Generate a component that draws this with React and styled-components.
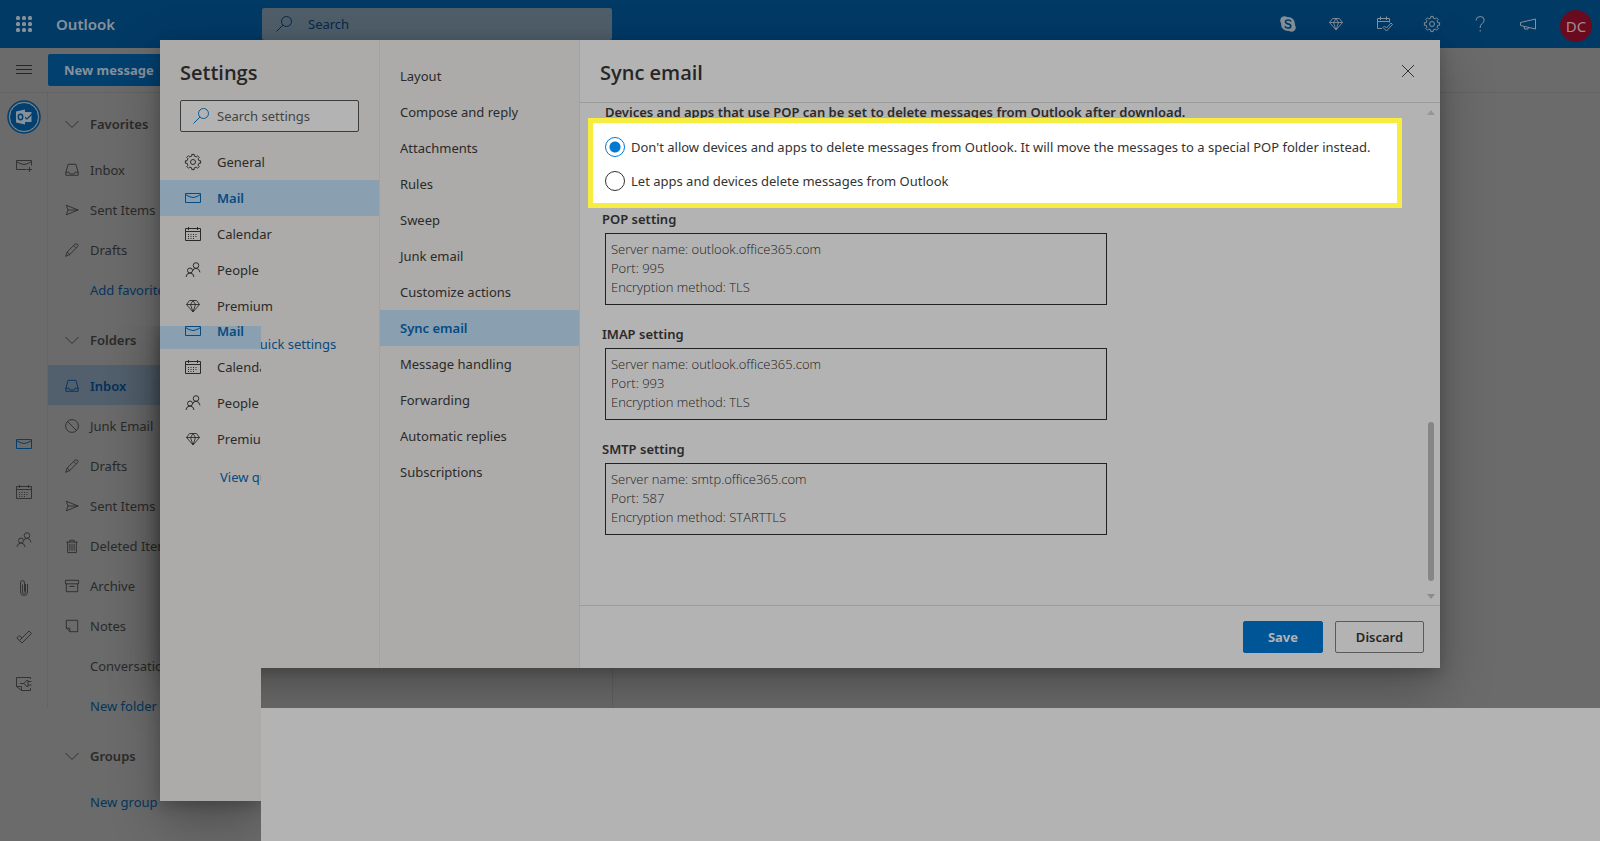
import React from "react";
import styled, { createGlobalStyle, css } from "styled-components";

const GlobalStyle = createGlobalStyle`
  * { box-sizing: border-box; }
  body {
    margin: 0;
    background: #6b6b6b;
    color: #2a2a2a;
    font: 400 13px/20px "Noto Sans", "Open Sans", sans-serif;
    overflow: hidden;
  }
  a { color: inherit; text-decoration: none; }
  button, input { font: inherit; color: inherit; }
  button { cursor: pointer; }
  h1, h2, h3, p { margin: 0; }
`;

/* ---------- icons ---------- */

const Svg = styled.svg`
  display: block;
  flex: none;
  width: ${(p) => p.$size || 16}px;
  height: ${(p) => p.$size || 16}px;
  fill: none;
  stroke: currentColor;
  stroke-width: 1;
  overflow: visible;
`;

const gearPath = (() => {
  const pts = [];
  const teeth = 8;
  for (let i = 0; i < teeth; i += 1) {
    [[-0.28, 6], [-0.2, 7.7], [0.2, 7.7], [0.28, 6]].forEach(([o, r]) => {
      const a = ((i + o) / teeth) * Math.PI * 2;
      pts.push(`${(8 + Math.sin(a) * r).toFixed(2)} ${(8 - Math.cos(a) * r).toFixed(2)}`);
    });
  }
  return `M${pts.join("L")}Z`;
})();

const shapes = {
  menu: <path d="M0 3.5h16M0 7.5h16M0 11.5h16" />,
  search: (
    <>
      <circle cx="10.5" cy="5.5" r="5" />
      <path d="M7 9L.5 15.5" />
    </>
  ),
  gear: (
    <>
      <path d={gearPath} />
      <circle cx="8" cy="8" r="2.5" />
    </>
  ),
  mail: <path d="M.5 3.5h15v9H.5zM.5 4.5l3.5 2q4 2.200 8 0l3.500-2" />,
  mailPlus: <path d="M10.500 12.500H.5v-9h15v5M.5 4.500l3.500 2q4 2.200 8 0l3.500-2M13.500 10v5M11 12.500h5" />,
  calendar: (
    <>
      <path d="M.5 2.500h15v12H.5zM.5 5.500h15M3.500 1v3M12.500 1v3" />
      <path d="M3 8.500h10M3 10.500h10M3 12.500h7" strokeDasharray="1 1.500" />
    </>
  ),
  people: (
    <>
      <circle cx="11" cy="3.500" r="2.800" />
      <path d="M7.500 9q.8-2.700 3.500-2.700 3.300 0 4 4" />
      <circle cx="5" cy="8.500" r="2.500" />
      <path d="M1 15q.5-4 4-4t4 4" />
    </>
  ),
  diamond: <path strokeWidth=".9" d="M4.500 2.500h7L14.500 6.500 8 14 1.500 6.500zM1.500 6.500h13M5.500 6.500L8 14l2.500-7.500M5.500 6.500L8 2.500l2.500 4" />,
  inbox: <path d="M3.500 1.500h9l2.500 9v3.500H1v-3.500zM1 10.500h3.500q.5 2 2 2h3q1.500 0 2-2H15" />,
  send: <path d="M1.500 2.500L15 8 1.500 13.500 3.500 8zM3.500 8H15" />,
  pencil: <path d="M.8 15.200l1.700-5L11.500 1.200q1.300-1 2.500.2 1.600 1.400.4 2.700L5.500 13.200zM2.500 10.200l3 3M10 2.800l3 3" />,
  junk: (
    <>
      <circle cx="8" cy="8" r="7.300" />
      <path d="M2.800 2.800l10.400 10.400" />
    </>
  ),
  trash: <path d="M1.500 3.500h13M5.500 3.500v-2h5v2M3 3.500v12h10v-12M5.500 5.500v8M8 5.500v8M10.500 5.500v8" />,
  archive: <path d="M.5 1.500h15v4H.5zM1.500 5.500v9h13v-9M5 8.500h6" />,
  note: <path d="M1.500 1.500h13v13h-9l-4-4zM1.500 10.500h4v4" />,
  chevron: <path d="M.5 4.500L8 12l7.500-7.500" />,
  clip: <path d="M11.500 4v8q0 3.500-3.500 3.500T4.500 12V3q0-2.500 2-2.500t2 2.500v8.500M6.500 4.500v8q0 1 1.500 1t1.500-1V4M4.500 5v7" />,
  check: <path d="M.8 10l2.500-2.500 2.700 2.500 7-7L15.500 5.500 6 15zM3.500 12.500L6 10" />,
  plug: <path d="M14.500 3V1.500H.5v9l5 4h9V12M.5 10.500h5v4M4 7.500h4M8 7.500l2.500-3H12v6h-1.500zM12 5.500h3.500M12 9h3.500" />,
  dayTask: <path d="M6 12.500H1.500V2.500h12v4M1.500 5.500h12M4.500.5v3.500M10.500.5v3.500M7 11.500l1.500-1.500 2 2 4.500-5 1.500 1.500-6 6.500z" />,
  help: (
    <>
      <path d="M4 4.500q.2-4 4.200-4 4 0 4 3.500 0 2-2 3.500-2 1.500-2 3.500v1" />
      <path d="M8.200 14v1.500" />
    </>
  ),
  horn: <path d="M15.500 3v10L.5 9.500v-3zM4 10.500l.5 2.500h3.500l.5-1.500" />,
  close: <path d="M2 2l12 12M14 2L2 14" />,
};

const Icon = ({ name, size }) => (
  <Svg $size={size} viewBox="0 0 16 16" aria-hidden="true">{shapes[name]}</Svg>
);

/* ---------- mail page behind the dialog ---------- */

const Page = styled.div`
  position: relative;
  min-height: 100vh;
  overflow: hidden;
`;

const Header = styled.header`
  display: flex;
  align-items: center;
  height: 48px;
  padding: 0 8px 0 16px;
  background: #023a66;
  color: #87919a;
`;

const Brand = styled.a`
  width: 206px;
  margin-left: 24px;
  font-size: 15px;
  font-weight: 600;
`;

const HeaderSearch = styled.label`
  display: flex;
  align-items: center;
  gap: 16px;
  width: 350px;
  height: 32px;
  padding-left: 14px;
  border-radius: 2px;
  background: #4f5e69;
  color: #04294a;
`;

const PlainInput = styled.input`
  flex: 1;
  min-width: 0;
  padding: 0;
  border: 0;
  outline: 0;
  background: transparent;
  &::placeholder { color: inherit; opacity: 1; }
`;

const HeaderTools = styled.div`
  display: flex;
  margin-left: auto;
`;

const IconButton = styled.button`
  display: grid;
  place-items: center;
  width: 48px;
  height: 48px;
  padding: 0;
  border: 0;
  background: transparent;
  color: ${(p) => p.$color || "inherit"};
`;

const Avatar = styled.button`
  width: 32px;
  height: 32px;
  margin: 10px 0 0 8px;
  padding: 0;
  border: 0;
  border-radius: 50%;
  background: #6a0a1e;
  color: #a58a90;
  font-size: 15px;
`;

const CommandBar = styled.div`
  display: flex;
  align-items: center;
  height: 45px;
  border-bottom: 1px solid #646464;
`;

const NewMessage = styled.button`
  width: 160px;
  height: 32px;
  padding: 0 0 0 16px;
  border: 0;
  border-radius: 2px;
  background: #02406f;
  color: #87919a;
  font-weight: 700;
  text-align: left;
`;

const Workspace = styled.div`
  display: flex;
  align-items: flex-start;
`;

const Rail = styled.nav`
  display: flex;
  flex-direction: column;
  width: 48px;
  height: 615px;
  border-right: 1px solid #646464;
  color: #333;
`;

const RailGroup = styled.div`
  margin-top: ${(p) => (p.$apart ? 231 : 0)}px;
`;

const Folders = styled.nav`
  width: 240px;
  white-space: nowrap;
`;

const MessageList = styled.main`
  width: 325px;
  height: 640px;
  border-right: 1px solid #626262;
`;

const FolderHeading = styled.h3`
  display: flex;
  align-items: center;
  gap: 11px;
  height: 56px;
  padding: 6px 0 0 17px;
  font-size: 13px;
  font-weight: 600;
`;

const Folder = styled.a`
  display: flex;
  align-items: center;
  gap: 11px;
  height: 40px;
  padding: 2px 0 0 ${(p) => (p.$link ? 42 : 17)}px;
  ${(p) => p.$link && css`color: #06355c;`}
  ${(p) => p.$current && css`
    background: #52606d;
    color: #04305a;
    font-weight: 600;
  `}
`;

/* ---------- settings dialog ---------- */

const shadow = "0 20px 50px rgba(0, 0, 0, 0.28), 0 4px 14px rgba(0, 0, 0, 0.2)";

const Dialog = styled.section`
  position: absolute;
  top: 40px;
  left: 160px;
  right: 160px;
  display: grid;
  grid-template-columns: 220px 200px 1fr;
  background: #b3b3b3;
  box-shadow: ${shadow};
`;

const Column = styled.div`
  border-right: 1px solid #a3a2a1;
  background: #acaba9;
  padding-top: ${(p) => p.$top || 0}px;
`;

const Title = styled.h2`
  font-family: "Open Sans", sans-serif;
  font-size: 20px;
  line-height: 28px;
  font-weight: 600;
  color: #262626;
`;

const SettingsTop = styled.div`
  padding: 19px 20px 12px;
`;

const SettingsSearch = styled.label`
  display: flex;
  align-items: center;
  gap: 8px;
  height: 32px;
  margin-top: 13px;
  padding: 0 8px 0 12px;
  border: 1px solid #3c3c3c;
  border-radius: 2px;
  background: #b3b3b3;
  color: #075a94;
`;

const SettingsInput = styled(PlainInput)`
  color: #444;
`;

const Row = styled.a`
  display: flex;
  align-items: center;
  gap: 16px;
  height: 36px;
  padding-left: ${(p) => (p.$plain ? 20 : 25)}px;
  white-space: nowrap;
  ${(p) => p.$current && css`
    background: #8a9fb0;
    color: #064c82;
    font-weight: 600;
  `}
`;

const QuickLink = styled.a`
  display: block;
  padding: 10px 0 0 60px;
  white-space: nowrap;
  color: #054a80;
`;

const Panel = styled.div`
  display: flex;
  flex-direction: column;
  min-width: 0;
`;

const PanelHead = styled.header`
  display: flex;
  justify-content: space-between;
  height: 63px;
  padding: 0 8px 0 20px;
  border-bottom: 1px solid #9c9c9c;
  ${Title} { padding-top: 19px; }
  ${IconButton} { height: 62px; }
`;

const PanelBody = styled.div`
  display: flex;
  height: 502px;
`;

const Content = styled.div`
  flex: 1;
  min-width: 0;
  padding: 0 19px 0 22px;
`;

const Lead = styled.p`
  height: 15px;
  padding-left: 3px;
  line-height: 18px;
  font-weight: 600;
  white-space: nowrap;
`;

const Highlight = styled.fieldset`
  position: relative;
  display: flex;
  flex-direction: column;
  gap: 14px;
  height: 90px;
  margin: 0 0 0 -14px;
  padding: 14px 0 0 12px;
  border: 5px solid #f7ec40;
  background: #fff;
`;

const Option = styled.label`
  display: flex;
  align-items: center;
  gap: 6px;
  height: 20px;
  white-space: nowrap;
  color: #333;
`;

const Radio = styled.input`
  appearance: none;
  flex: none;
  width: 20px;
  height: 20px;
  margin: 0;
  border: 1px solid #333;
  border-radius: 50%;
  &:checked {
    border-color: #0078d4;
    background: radial-gradient(circle, #0078d4 5px, transparent 6px);
  }
`;

const Server = styled.section`
  margin-bottom: 18px;
`;

const ServerTitle = styled.h3`
  height: 25px;
  font-size: 13px;
  line-height: 22px;
  font-weight: 600;
`;

const ServerBox = styled.div`
  width: 502px;
  max-width: 100%;
  height: 72px;
  margin-left: 3px;
  padding: 6px 5px;
  border: 1px solid #222;
  color: #1c1c1c;
  font-family: "Open Sans", sans-serif;
  line-height: 19px;
  font-weight: 300;
`;

const Scrollbar = styled.div`
  display: flex;
  flex-direction: column;
  justify-content: space-between;
  align-items: center;
  width: 19px;
  padding: 7px 0 6px;
`;

const Arrow = styled.i`
  border: solid transparent;
  border-width: 0 4px;
  ${(p) => (p.$up ? "border-bottom: 5px solid #969696;" : "border-top: 5px solid #8c8c8c;")}
`;

const Thumb = styled.i`
  width: 6px;
  height: 159px;
  margin: auto 0 13px;
  border-radius: 3px;
  background: #868686;
`;

const Footer = styled.footer`
  display: flex;
  justify-content: flex-end;
  gap: 12px;
  height: 63px;
  padding: 15px 16px 0 0;
  border-top: 1px solid #9c9c9c;
`;

const ActionButton = styled.button`
  width: ${(p) => (p.$primary ? 80 : 89)}px;
  height: 32px;
  padding: 0;
  border: 1px solid ${(p) => (p.$primary ? "#005596" : "#5a5a5a")};
  border-radius: 2px;
  background: ${(p) => (p.$primary ? "#005596" : "transparent")};
  color: ${(p) => (p.$primary ? "#b3b3b3" : "#262626")};
  font-weight: ${(p) => (p.$primary ? 700 : 600)};
`;

/* a narrow repeat of the settings list that hangs below the dialog */
const Strip = styled.div`
  position: absolute;
  top: 326px;
  left: 160px;
  width: 101px;
  height: 475px;
  overflow: hidden;
  background: #acaba9;
  box-shadow: ${shadow};
  clip-path: inset(0 0 -100px -100px);
`;

const StripList = styled.div`
  margin-top: -13px;
`;

const Sheet = styled.div`
  position: absolute;
  top: 708px;
  left: 261px;
  right: 0;
  bottom: 0;
  background: #b3b3b3;
`;

const categories = [
  ["gear", "General"],
  ["mail", "Mail"],
  ["calendar", "Calendar"],
  ["people", "People"],
  ["diamond", "Premium"],
];

const mailPages = [
  "Layout", "Compose and reply", "Attachments", "Rules", "Sweep", "Junk email",
  "Customize actions", "Sync email", "Message handling", "Forwarding",
  "Automatic replies", "Subscriptions",
];

const folderGroups = [
  ["Favorites", [["inbox", "Inbox"], ["send", "Sent Items"], ["pencil", "Drafts"], [null, "Add favorite", "link"]]],
  ["Folders", [
    ["inbox", "Inbox", "current"], ["junk", "Junk Email"], ["pencil", "Drafts"], ["send", "Sent Items"],
    ["trash", "Deleted Items"], ["archive", "Archive"], ["note", "Notes"],
    [null, "Conversation History", "plain"], [null, "New folder", "link"],
  ]],
  ["Groups", [[null, "New group", "link"]]],
];

const FolderText = styled.span`
  margin-left: ${(p) => (p.$indent ? 25 : 0)}px;
`;

const servers = [
  ["POP setting", "outlook.office365.com", "995", "TLS"],
  ["IMAP setting", "outlook.office365.com", "993", "TLS"],
  ["SMTP setting", "smtp.office365.com", "587", "STARTTLS"],
];

const CategoryList = ({ items }) => (
  <>
    {items.map(([icon, label]) => (
      <Row href="#" key={label} $current={label === "Mail"}>
        <Icon name={icon} />
        {label}
      </Row>
    ))}
    <QuickLink href="#">View quick settings</QuickLink>
  </>
);

const Waffle = () => (
  <Svg viewBox="0 0 16 16" aria-hidden="true">
    {[0, 6, 12].flatMap((y) => [0, 6, 12].map((x) => (
      <rect key={`${x}-${y}`} x={x} y={y} width="4" height="4" rx="1.500" fill="currentColor" stroke="none" />
    )))}
  </Svg>
);

const OutlookBadge = () => (
  <Svg $size={34} viewBox="0 0 34 34" aria-hidden="true">
    <circle cx="17" cy="17" r="16" stroke="#02406f" strokeWidth="1.5" />
    <circle cx="17" cy="17" r="14.500" fill="#02406f" stroke="#7c8791" />
    <path d="M17 12h7.500v10H17z" fill="#87919a" stroke="none" />
    <path d="M17.500 17l2.500 2 5-5" stroke="#02406f" strokeWidth="1.200" />
    <path d="M9 11.500L18 9.500v15L9 22.500z" fill="#87919a" stroke="none" />
    <ellipse cx="13.500" cy="17" rx="2.200" ry="2.700" stroke="#02406f" strokeWidth="1.500" />
  </Svg>
);

const Skype = () => (
  <Svg viewBox="0 0 16 16" aria-hidden="true">
    <g fill="currentColor" stroke="none">
      <circle cx="8" cy="8" r="7" />
      <circle cx="4.500" cy="4.500" r="4.300" />
      <circle cx="11.500" cy="11.500" r="4.300" />
    </g>
    <path d="M11 5.500Q10.300 4 8 4 5.500 4 5.500 5.800 5.500 7.400 8 7.900q2.800.5 2.800 2.300 0 1.800-2.800 1.800-2.300 0-3-1.700" stroke="#023a66" strokeWidth="1.600" />
  </Svg>
);

export default function App() {
  return (
    <Page>
      <GlobalStyle />
      <Header>
        <Waffle />
        <Brand href="#">Outlook</Brand>
        <HeaderSearch>
          <Icon name="search" />
          <PlainInput type="search" placeholder="Search" aria-label="Search" />
        </HeaderSearch>
        <HeaderTools>
          <IconButton aria-label="Skype"><Skype /></IconButton>
          {["diamond", "dayTask", "gear", "help", "horn"].map((n) => (
            <IconButton key={n} aria-label={n}><Icon name={n} /></IconButton>
          ))}
          <Avatar>DC</Avatar>
        </HeaderTools>
      </Header>
      <CommandBar>
        <IconButton aria-label="Menu" $color="#022f55"><Icon name="menu" /></IconButton>
        <NewMessage>New message</NewMessage>
      </CommandBar>
      <Workspace>
        <Rail>
          <RailGroup>
            <IconButton aria-label="Outlook"><OutlookBadge /></IconButton>
            <IconButton aria-label="New mail"><Icon name="mailPlus" /></IconButton>
          </RailGroup>
          <RailGroup $apart>
            <IconButton aria-label="Mail" $color="#033e70"><Icon name="mail" /></IconButton>
            {["calendar", "people", "clip", "check", "plug"].map((n) => (
              <IconButton key={n} aria-label={n}><Icon name={n} /></IconButton>
            ))}
          </RailGroup>
        </Rail>
        <Folders>
          {folderGroups.map(([title, items]) => (
            <React.Fragment key={title}>
              <FolderHeading><Icon name="chevron" size={14} />{title}</FolderHeading>
              {items.map(([icon, label, kind]) => (
                <Folder href="#" key={label} $link={kind === "link"} $current={kind === "current"}>
                  {icon && <Icon name={icon} size={14} />}
                  <FolderText $indent={kind === "plain"}>{label}</FolderText>
                </Folder>
              ))}
            </React.Fragment>
          ))}
        </Folders>
        <MessageList />
      </Workspace>

      <Dialog role="dialog" aria-label="Settings">
        <Column>
          <SettingsTop>
            <Title>Settings</Title>
            <SettingsSearch>
              <Icon name="search" />
              <SettingsInput type="search" placeholder="Search settings" aria-label="Search settings" />
            </SettingsSearch>
          </SettingsTop>
          <CategoryList items={categories} />
        </Column>
        <Column $top={18}>
          {mailPages.map((label) => (
            <Row href="#" key={label} $plain $current={label === "Sync email"}>{label}</Row>
          ))}
        </Column>
        <Panel>
          <PanelHead>
            <Title>Sync email</Title>
            <IconButton aria-label="Close" $color="#333"><Icon name="close" /></IconButton>
          </PanelHead>
          <PanelBody>
            <Content>
              <Lead>Devices and apps that use POP can be set to delete messages from Outlook after download.</Lead>
              <Highlight>
                <Option>
                  <Radio type="radio" name="pop" defaultChecked />
                  Don't allow devices and apps to delete messages from Outlook. It will move the messages to a special POP folder instead.
                </Option>
                <Option>
                  <Radio type="radio" name="pop" />
                  Let apps and devices delete messages from Outlook
                </Option>
              </Highlight>
              {servers.map(([title, host, port, method]) => (
                <Server key={title}>
                  <ServerTitle>{title}</ServerTitle>
                  <ServerBox>
                    <div>Server name: {host}</div>
                    <div>Port: {port}</div>
                    <div>Encryption method: {method}</div>
                  </ServerBox>
                </Server>
              ))}
            </Content>
            <Scrollbar>
              <Arrow $up />
              <Thumb />
              <Arrow />
            </Scrollbar>
          </PanelBody>
          <Footer>
            <ActionButton $primary>Save</ActionButton>
            <ActionButton>Discard</ActionButton>
          </Footer>
        </Panel>
      </Dialog>

      <Strip>
        <StripList>
          <CategoryList items={categories.slice(1)} />
        </StripList>
      </Strip>
      <Sheet />
    </Page>
  );
}
